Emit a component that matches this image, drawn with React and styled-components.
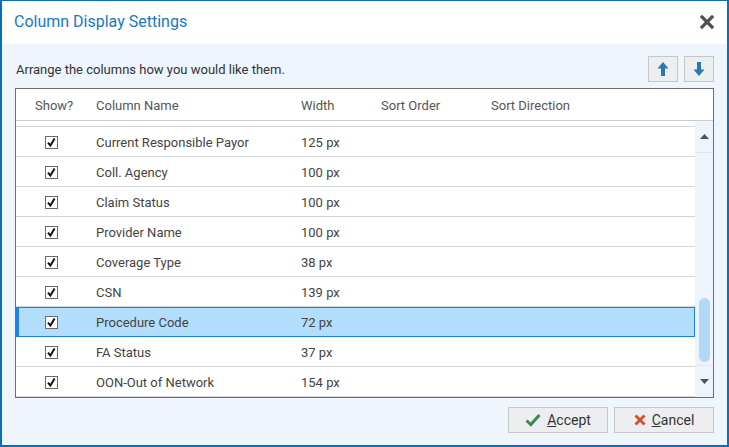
import React from "react";
import styled, { createGlobalStyle, css } from "styled-components";

const GlobalStyle = createGlobalStyle`
  html, body {
    margin: 0;
    padding: 0;
    background: #ffffff;
  }
  body {
    font-family: Roboto, "Liberation Sans", Arial, sans-serif;
  }
  * {
    box-sizing: border-box;
  }
`;

const columns = [
  { name: "Current Responsible Payor", width: "125 px" },
  { name: "Coll. Agency", width: "100 px" },
  { name: "Claim Status", width: "100 px" },
  { name: "Provider Name", width: "100 px" },
  { name: "Coverage Type", width: "38 px" },
  { name: "CSN", width: "139 px" },
  { name: "Procedure Code", width: "72 px", selected: true },
  { name: "FA Status", width: "37 px" },
  { name: "OON-Out of Network", width: "154 px" },
];

const CheckBox = () => (
  <svg width="13" height="13" viewBox="0 0 13 13">
    <rect x="0.5" y="0.5" width="12" height="12" fill="#fff" stroke="#6a6a6a" />
    <path d="M3 6.6 L5.4 9.6 L9.6 2.6" fill="none" stroke="#111" strokeWidth="2" />
  </svg>
);

const CloseIcon = () => (
  <svg width="14" height="14" viewBox="0 0 14 14">
    <path d="M2 2 L12 12 M12 2 L2 12" stroke="#505050" strokeWidth="3.2" strokeLinecap="square" />
  </svg>
);

const ArrowIcon = ({ down }) => (
  <svg width="12" height="16" viewBox="0 0 12 16" style={down ? { transform: "rotate(180deg)" } : undefined}>
    <path d="M6 1 L11.5 7.5 L8 7.5 L8 15 L4 15 L4 7.5 L0.5 7.5 Z" fill="#2a78ad" />
  </svg>
);

const AcceptIcon = () => (
  <svg width="16" height="14" viewBox="0 0 16 14">
    <path d="M1.5 7.5 L5.8 11.5 L14.5 2" fill="none" stroke="#3a8a4e" strokeWidth="3" />
  </svg>
);

const CancelIcon = () => (
  <svg width="12" height="12" viewBox="0 0 12 12">
    <path d="M1.5 1.5 L10.5 10.5 M10.5 1.5 L1.5 10.5" stroke="#d44d2c" strokeWidth="2.8" />
  </svg>
);

const Tri = ({ down }) => (
  <svg width="9" height="5" viewBox="0 0 9 5">
    <path d={down ? "M0 0 L9 0 L4.5 5 Z" : "M0 5 L9 5 L4.5 0 Z"} fill="#4a5563" />
  </svg>
);

export default function App() {
  return (
    <>
      <GlobalStyle />
      <Window>
        <TitleBar>
          <Title>Column Display Settings</Title>
          <CloseButton aria-label="Close">
            <CloseIcon />
          </CloseButton>
        </TitleBar>
        <Body>
          <Toolbar>
            <Hint>Arrange the columns how you would like them.</Hint>
            <MoveButtons>
              <MoveButton aria-label="Move up">
                <ArrowIcon />
              </MoveButton>
              <MoveButton aria-label="Move down">
                <ArrowIcon down />
              </MoveButton>
            </MoveButtons>
          </Toolbar>
          <TableBox>
            <HeaderRow>
              <HeadCell $first>Show?</HeadCell>
              <HeadCell>Column Name</HeadCell>
              <HeadCell>Width</HeadCell>
              <HeadCell>Sort Order</HeadCell>
              <HeadCell>Sort Direction</HeadCell>
            </HeaderRow>
            <TableBody>
              <Rows>
                <RowStub />
                {columns.map((c) => (
                  <Row key={c.name} $selected={c.selected}>
                    <CheckCell>
                      <CheckBox />
                    </CheckCell>
                    <Cell>{c.name}</Cell>
                    <Cell>{c.width}</Cell>
                    <Cell />
                    <Cell />
                  </Row>
                ))}
              </Rows>
              <ScrollBar>
                <ScrollButton $top>
                  <Tri />
                </ScrollButton>
                <Track>
                  <Thumb />
                </Track>
                <ScrollButton>
                  <Tri down />
                </ScrollButton>
              </ScrollBar>
            </TableBody>
          </TableBox>
          <Footer>
            <ActionButton>
              <AcceptIcon />
              <span>
                <u>A</u>ccept
              </span>
            </ActionButton>
            <ActionButton>
              <CancelIcon />
              <span>
                <u>C</u>ancel
              </span>
            </ActionButton>
          </Footer>
        </Body>
      </Window>
    </>
  );
}

const Window = styled.div`
  width: 729px;
  height: 447px;
  display: flex;
  flex-direction: column;
  border: 2px solid #0b6fb3;
  border-top-width: 1px;
  background: #eef5fc;
`;

const TitleBar = styled.div`
  height: 43px;
  flex-shrink: 0;
  background: #ffffff;
  display: flex;
  align-items: center;
  justify-content: space-between;
  padding: 0 13px 2px 12px;
`;

const Title = styled.div`
  font-size: 16px;
  color: #1878c0;
`;

const CloseButton = styled.button`
  border: none;
  background: none;
  padding: 0;
  display: flex;
  cursor: pointer;
`;

const Body = styled.div`
  flex: 1;
  display: flex;
  flex-direction: column;
  padding: 0 13px;
`;

const Toolbar = styled.div`
  height: 44px;
  flex-shrink: 0;
  display: flex;
  align-items: center;
  justify-content: space-between;
  padding-top: 6px;
`;

const Hint = styled.div`
  font-size: 13px;
  color: #333;
  padding-left: 1px;
`;

const MoveButtons = styled.div`
  display: flex;
  gap: 6px;
`;

const MoveButton = styled.button`
  width: 30px;
  height: 26px;
  padding: 0;
  display: flex;
  align-items: center;
  justify-content: center;
  background: #eceef0;
  border: 1px solid #c3c7cb;
  cursor: pointer;
`;

const TableBox = styled.div`
  height: 310px;
  flex-shrink: 0;
  display: flex;
  flex-direction: column;
  border: 1px solid #6b6e72;
  background: #ffffff;
`;

const gridCols = css`
  display: grid;
  grid-template-columns: 80px 205px 80px 110px 1fr;
  align-items: center;
`;

const HeaderRow = styled.div`
  ${gridCols};
  height: 32px;
  flex-shrink: 0;
  border-bottom: 1px solid #c9cdd0;
  font-size: 13px;
  color: #555;
  padding-top: 1px;
`;

const HeadCell = styled.div`
  padding-left: ${(p) => (p.$first ? "19px" : "0")};
  white-space: nowrap;
`;

const TableBody = styled.div`
  flex: 1;
  display: flex;
  min-height: 0;
`;

const Rows = styled.div`
  flex: 1;
  display: flex;
  flex-direction: column;
  overflow: hidden;
`;

const RowStub = styled.div`
  height: 6px;
  flex-shrink: 0;
  border-bottom: 1px solid #d2d6d8;
`;

const Row = styled.div`
  ${gridCols};
  height: 30px;
  flex-shrink: 0;
  border-bottom: 1px solid #d2d6d8;
  font-size: 13px;
  color: #444;
  padding-top: 1px;
  ${(p) =>
    p.$selected &&
    css`
      background: #b2ddfb;
      border-bottom-color: #1c82e4;
      box-shadow: inset 3px 0 0 #1c82e4, inset -1px 0 0 #1c82e4,
        inset 0 1px 0 #1c82e4;
    `}
`;

const CheckCell = styled.div`
  padding-left: 29px;
  display: flex;
  align-items: center;
  padding-top: 1px;
`;

const Cell = styled.div`
  white-space: nowrap;
`;

const ScrollBar = styled.div`
  width: 18px;
  flex-shrink: 0;
  display: flex;
  flex-direction: column;
  background: #edf4fc;
`;

const ScrollButton = styled.div`
  height: 32px;
  flex-shrink: 0;
  display: flex;
  align-items: center;
  justify-content: center;
  ${(p) =>
    p.$top
      ? css`
          border-bottom: 1px solid #d8e8f6;
        `
      : css`
          border-top: 1px solid #d8e8f6;
        `}
`;

const Track = styled.div`
  flex: 1;
  display: flex;
  flex-direction: column;
  justify-content: flex-end;
  align-items: center;
  padding-bottom: 3px;
`;

const Thumb = styled.div`
  width: 11px;
  height: 64px;
  border-radius: 6px;
  background: #b3d8f6;
`;

const Footer = styled.div`
  flex: 1;
  display: flex;
  justify-content: flex-end;
  align-items: flex-start;
  gap: 6px;
  padding-top: 9px;
`;

const ActionButton = styled.button`
  width: 100px;
  height: 26px;
  display: flex;
  align-items: center;
  justify-content: center;
  gap: 6px;
  background: #eceef0;
  border: 1px solid #c6c9cc;
  font-family: Roboto, "Liberation Sans", Arial, sans-serif;
  font-size: 14px;
  color: #333;
  cursor: pointer;
  padding: 0;

  u {
    text-decoration-thickness: 1px;
  }
`;
